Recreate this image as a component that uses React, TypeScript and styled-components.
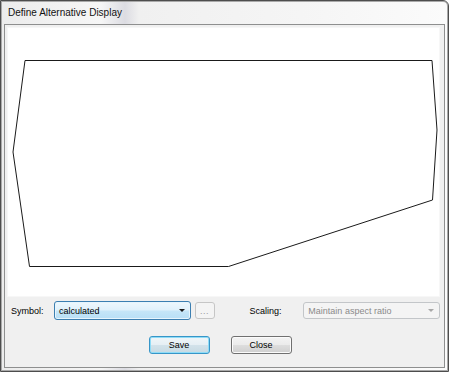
import React from "react";
import styled, { createGlobalStyle } from "styled-components";

const GlobalStyle = createGlobalStyle`
  html, body {
    margin: 0;
    padding: 0;
    background: #ffffff;
  }
  body {
    font-family: "Liberation Sans", Arial, sans-serif;
  }
`;

const Window = styled.div`
  box-sizing: border-box;
  width: 449px;
  height: 372px;
  border: 1px solid #4d4d4d;
  border-top-right-radius: 6px;
  background: linear-gradient(
    90deg,
    #ececec 0,
    #f6f6f6 100px,
    #dcdce2 124px,
    #f0f0f0 138px,
    #f5f5f5 300px,
    #fbfbfb 100%
  );
  box-shadow: inset 0 0 0 1px #a9a9a9;
  display: flex;
  flex-direction: column;
  padding: 0 3px 3px 3px;
`;

const TitleBar = styled.div`
  height: 23px;
  display: flex;
  align-items: center;
  padding-left: 4px;
  font-size: 10px;
  color: #111;
`;

const Client = styled.div`
  flex: 1;
  border: 1px solid #8e8f8f;
  background: #f0f0f0;
  display: flex;
  flex-direction: column;
  padding: 2px 4px 0 2px;
`;

const Canvas = styled.div`
  height: 270px;
  background: #ffffff;
  box-shadow: inset 0 0 0 1px #f7f7f7;
`;

const Shape = styled.svg`
  display: block;
  width: 100%;
  height: 100%;
`;

const FormRow = styled.div`
  display: flex;
  align-items: center;
  height: 19px;
  margin-top: 4px;
  padding-left: 4px;
  font-size: 9px;
`;

const Label = styled.span<{ $width: number; $gap?: number }>`
  width: ${(p) => p.$width}px;
  margin-left: ${(p) => p.$gap ?? 0}px;
  color: #000;
`;

const Combo = styled.div<{ $disabled?: boolean }>`
  box-sizing: border-box;
  width: 137px;
  height: ${(p) => (p.$disabled ? 17 : 19)}px;
  display: flex;
  align-items: center;
  justify-content: space-between;
  padding: 0 5px 0 4px;
  border-radius: 3px;
  border: 1px solid ${(p) => (p.$disabled ? "#c3c6c9" : "#3c7fb1")};
  background: ${(p) =>
    p.$disabled
      ? "#f4f4f4"
      : "linear-gradient(180deg, #eef8fd 0%, #e0f1fb 48%, #c6e6f8 52%, #b8dff6 100%)"};
  color: ${(p) => (p.$disabled ? "#8b8b8b" : "#000")};
  box-shadow: ${(p) => (p.$disabled ? "none" : "inset 0 0 0 1px #e7f5fd")};
`;

const Arrow = styled.span<{ $disabled?: boolean }>`
  width: 0;
  height: 0;
  border-left: 3px solid transparent;
  border-right: 3px solid transparent;
  border-top: 3px solid ${(p) => (p.$disabled ? "#a8a8a8" : "#1a1a1a")};
`;

const DotsButton = styled.div`
  box-sizing: border-box;
  width: 20px;
  height: 17px;
  margin-left: 4px;
  border: 1px solid #c6c6c6;
  border-radius: 3px;
  background: #f4f4f4;
  color: #9a9a9a;
  font-size: 9px;
  display: flex;
  align-items: center;
  justify-content: center;
  letter-spacing: 0.5px;
`;

const ButtonRow = styled.div`
  display: flex;
  justify-content: center;
  gap: 21px;
  margin-top: 16px;
  padding-right: 7px;
`;

const PushButton = styled.div<{ $default?: boolean }>`
  box-sizing: border-box;
  width: 61px;
  height: 18px;
  border-radius: 3px;
  border: 1px solid ${(p) => (p.$default ? "#3796c8" : "#707070")};
  background: ${(p) =>
    p.$default
      ? "linear-gradient(180deg, #f0f6f9 0%, #e6eff4 48%, #d2e2ea 52%, #c7dae3 100%)"
      : "linear-gradient(180deg, #f3f3f3 0%, #ebebeb 48%, #dddddd 52%, #cfcfcf 100%)"};
  box-shadow: inset 0 0 0 1px ${(p) => (p.$default ? "#8fdcf7" : "#fbfbfb")};
  font-size: 9px;
  color: #000;
  display: flex;
  align-items: center;
  justify-content: center;
`;

const App = () => {
  return (
    <>
      <GlobalStyle />
      <Window>
        <TitleBar>Define Alternative Display</TitleBar>
        <Client>
          <Canvas>
            <Shape viewBox="0 0 430 270">
              <polygon
                points="16.5,33.5 423.5,33.5 428.5,103 424,173 220,239.5 21,239.5 4.5,125"
                fill="none"
                stroke="#1a1a1a"
                strokeWidth="1"
              />
            </Shape>
          </Canvas>
          <FormRow>
            <Label $width={43}>Symbol:</Label>
            <Combo>
              <span>calculated</span>
              <Arrow />
            </Combo>
            <DotsButton>...</DotsButton>
            <Label $width={54} $gap={35}>
              Scaling:
            </Label>
            <Combo $disabled>
              <span>Maintain aspect ratio</span>
              <Arrow $disabled />
            </Combo>
          </FormRow>
          <ButtonRow>
            <PushButton $default>Save</PushButton>
            <PushButton>Close</PushButton>
          </ButtonRow>
        </Client>
      </Window>
    </>
  );
};

export default App;
